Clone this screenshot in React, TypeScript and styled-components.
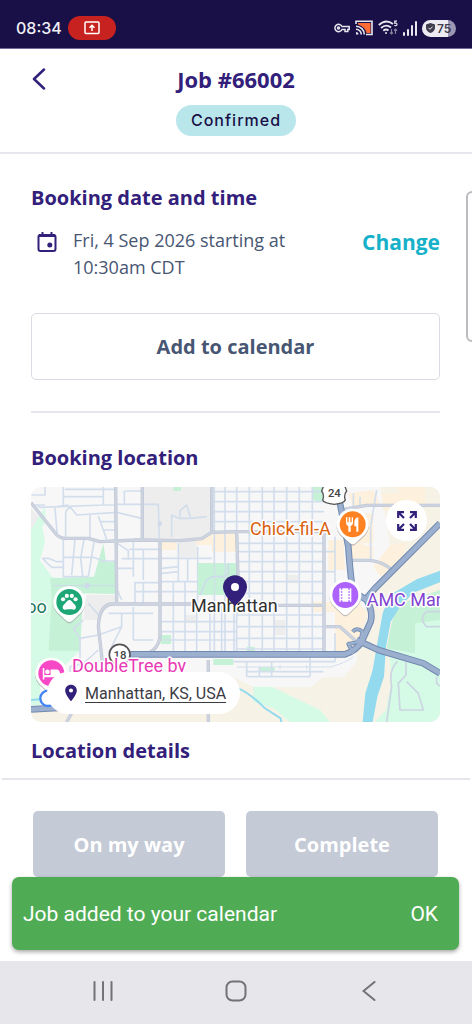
import React from 'react';
import styled, { createGlobalStyle } from 'styled-components';
import { MdHotel, MdPets, MdTheaters, MdLocationOn } from 'react-icons/md';

const color = {
  night: '#191047',
  indigo: '#32207a',
  slate: '#475672',
  teal: '#16b1c9',
  line: '#e6e6ec',
  outline: '#dadbe3',
  green: '#4fac54',
};

const GlobalStyle = createGlobalStyle`
  *, *::before, *::after { box-sizing: border-box; }
  body { margin: 0; background: #fff; font-family: 'Open Sans', 'Noto Sans', sans-serif; }
  h1, h2, p { margin: 0; }
  button { font: inherit; border: 0; padding: 0; background: none; cursor: pointer; }
  svg { display: block; }
`;

const Screen = styled.div`
  position: relative;
  display: flex;
  flex-direction: column;
  min-height: 100vh;
  overflow: hidden;
`;

const StatusBar = styled.div`
  display: flex;
  align-items: center;
  justify-content: space-between;
  height: 49px;
  padding: 8px 16px 0 16px;
  background: ${color.night};
  border-bottom: 1px solid #73699a;
  color: #f1f0f6;
  font-family: Inter, sans-serif;
`;

const StatusGroup = styled.div<{ $gap: number }>`
  display: flex;
  align-items: center;
  gap: ${({ $gap }) => $gap}px;
`;

const Clock = styled.span`
  font-size: 16px;
  font-weight: 500;
`;

const RecordingPill = styled.span`
  display: flex;
  align-items: center;
  justify-content: center;
  width: 48px;
  height: 24px;
  border-radius: 12px;
  background: #c7221f;
`;

const Battery = styled.span`
  display: flex;
  align-items: center;
  gap: 2px;
  width: 34px;
  height: 17px;
  padding-left: 4px;
  border-radius: 9px;
  background: linear-gradient(90deg, #ececf2 76%, #9c97b3 76%);
  color: #403d4c;
  font-size: 12px;
  font-weight: 600;
`;

const Header = styled.header`
  display: grid;
  grid-template-columns: 40px 1fr 40px;
  justify-items: center;
  row-gap: 11px;
  padding: 15px 19px 16px;
  border-bottom: 2px solid ${color.line};
`;

const BackButton = styled.button`
  display: flex;
  align-items: center;
  justify-content: center;
  width: 40px;
  height: 30px;
`;

const Title = styled.h1`
  color: ${color.indigo};
  font-size: 22px;
  line-height: 30px;
  font-weight: 700;
`;

const StatusBadge = styled.span`
  grid-column: 2;
  padding: 0 15px;
  border-radius: 16px;
  background: #b9e6eb;
  color: ${color.night};
  font-family: Inter, sans-serif;
  font-size: 16px;
  line-height: 31px;
  font-weight: 500;
  letter-spacing: 1px;
`;

const Content = styled.main`
  flex: 1;
  padding: 29px 32px 12px 31px;
`;

const SectionTitle = styled.h2`
  color: ${color.indigo};
  font-size: 20px;
  line-height: 30px;
  font-weight: 700;
`;

const DateRow = styled.div`
  display: flex;
  align-items: flex-start;
  gap: 16px;
  margin: 14px 0 32px;
  padding-left: 6px;
`;

const CalendarIcon = styled.svg`
  width: 20px;
  height: 27px;
`;

const DateText = styled.p`
  flex: 1;
  max-width: 240px;
  color: ${color.slate};
  font-size: 18px;
  line-height: 27px;
`;

const ChangeLink = styled.a`
  margin-left: auto;
  color: ${color.teal};
  font-size: 21px;
  line-height: 30px;
  font-weight: 700;
  text-decoration: none;
`;

const OutlineButton = styled.button`
  width: 100%;
  height: 67px;
  border: 1px solid ${color.outline};
  border-radius: 5px;
  color: ${color.slate};
  font-size: 20px;
  font-weight: 700;
`;

const Divider = styled.hr`
  height: 2px;
  margin: 31px 0 30px;
  border: 0;
  background: ${color.line};
`;

const MapCard = styled.div`
  position: relative;
  margin: 14px 0;
  border-radius: 10px;
  overflow: hidden;
`;

const MapDrawing = styled.svg`
  width: 100%;
  aspect-ratio: 409 / 235;
`;

const ExpandButton = styled.button`
  position: absolute;
  top: 13px;
  right: 13px;
  display: flex;
  align-items: center;
  justify-content: center;
  width: 41px;
  height: 41px;
  border-radius: 50%;
  background: #fff;
`;

const AddressChip = styled.a`
  position: absolute;
  left: 16px;
  bottom: 8px;
  display: flex;
  align-items: center;
  gap: 4px;
  height: 42px;
  padding: 0 14px 0 14px;
  border-radius: 21px;
  background: #fff;
  color: #3c3b44;
  font-family: Roboto, sans-serif;
  font-size: 16px;
  text-decoration: underline;
  text-underline-offset: 3px;
`;

const Footer = styled.footer`
  position: relative;
  display: grid;
  grid-template-columns: 1fr 1fr;
  gap: 21px;
  margin: 0 2px;
  padding: 31px 32px 84px 31px;
  border-top: 2px solid ${color.line};
`;

const ActionButton = styled.button`
  height: 66px;
  border-radius: 5px;
  background: #c4cad6;
  color: #fff;
  font-size: 20px;
  font-weight: 700;
`;

const Toast = styled.div`
  position: absolute;
  left: 10px;
  right: 11px;
  bottom: 11px;
  display: flex;
  align-items: center;
  justify-content: space-between;
  height: 73px;
  padding: 0 21px 0 11px;
  border-radius: 7px;
  background: ${color.green};
  box-shadow: 0 2px 4px rgba(0, 0, 0, 0.35);
  color: #fff;
  font-family: Roboto, sans-serif;
  font-size: 21px;
`;

const ToastAction = styled.button`
  color: #fff;
`;

const NavBar = styled.nav`
  display: flex;
  align-items: center;
  justify-content: space-around;
  height: 63px;
  padding: 0 37px 4px;
  background: #e7e6eb;
`;

const NavButton = styled.button`
  display: flex;
  align-items: center;
  justify-content: center;
  width: 40px;
  height: 40px;
`;

const EdgePanel = styled.span`
  position: absolute;
  top: 191px;
  right: -8px;
  width: 14px;
  height: 151px;
  border: 2px solid #bcbcc0;
  border-radius: 6px;
  background: #fff;
`;

const minorRoads = [
  // north-west streets
  'M33 45H75V21M75 75H33M50 75L60 82L250 75H290M130 21V75M130 50H250M135 28H285M250 21V75',
  'M105 83L112 170M112 80L145 75M137 95L150 80L170 105L290 97L365 115M137 95V170M210 105V175M235 108L260 178M240 125H290M250 150H290M313 33V73M292 73H365M315 33H365',
  // streets below the main road
  'M130 178V290H205M130 232H220L250 243H288M165 178L155 285M192 178L182 235L188 288M222 185L205 290M67 235L95 262L130 262M67 235H85L110 245H130',
  'M292 190L325 212V240M305 236H420M328 208H420M340 180V290M292 265H340V285M370 208V300M475 190V305M503 235V305M533 200V370M420 235H575M425 265L475 260M425 280L475 275M420 305H533',
  // campus
  'M365 73H415L418 175M455 170V105L475 115H512L500 75L480 92V112M512 115L560 110',
  'M345 305V370M345 308H420M345 335H420M370 305V370M292 330L305 360M460 305V515M495 305V515M530 370V515M570 370V515M605 370V515M642 370V515M425 335H533M425 425H650M425 455H650M425 480H650',
  // park loop
  'M540 345L560 300L575 290L570 250M625 250V280L612 293H575',
  // south-west
  'M240 410L205 370M160 445L180 475V560M160 445L190 420M180 475L235 465L305 440V400M305 440L265 520M150 560L190 550L235 510M150 560V590M340 380V480M340 480H400M265 400H400',
  // rail-side streets south of the highway
  'M680 545V590M718 560V590M755 545V590M870 520V590M680 590H870M680 575H910M640 545H945M945 460V545',
  // east side
  'M945 170V320M913 215H945M913 275H945M1000 40V90M1020 50V85M1052 140V240M1070 30L1060 90L1052 140',
];

const parkPaths = [
  'M1260 395H1220Q1195 415 1220 440H1260',
  'M1132 545Q1105 570 1115 620L1100 726M1158 545V585L1135 610L1140 690H1210L1195 640L1160 605M1250 590V610L1260 618',
];

const majorRoads = [
  'M33 68L108 162Q120 176 140 175H205L240 185L350 180L480 182L545 176L575 157L650 155L655 330',
  'M287 21L290 365',
  'M367 21V180',
  'M575 21V155',
  'M420 182V470Q415 505 385 520',
  'M247 545L235 440Q238 375 275 372H520',
  'M655 155H910M912 155V525M775 376H912',
  'M912 440H960L1010 485',
  'M970 88L1040 76H1260',
  'M985 241H1050Q1090 245 1115 270',
  'M565 540V726M160 690L140 726',
];

const highways = [
  'M330 523H975Q1010 510 1025 485L1052 425Q1060 395 1040 360L1000 335Q993 310 985 200L960 70',
  'M1260 130L1065 325L1035 360',
  'M1010 480L1075 510L1210 550L1260 580',
  'M33 688L180 680',
  'M1000 520L985 492L1022 485M998 455Q1010 440 1028 455L1020 485',
];

const gridX = [583, 615, 650, 688, 727, 762, 800, 838, 877];
const gridY = [35, 65, 95, 125, 190, 215, 245, 275, 305, 340, 376, 405, 440, 475, 507];

type MarkerProps = { x: number; y: number; fill: string; children: React.ReactNode };

const markerShape = 'M0 -47A47 47 0 0 1 37 30L9 56Q0 64 -9 56L-37 30A47 47 0 0 1 0 -47Z';

// A teardrop place marker with a white rim and a glyph in its disc.
const Marker = ({ x, y, fill, children }: MarkerProps) => (
  <g transform={`translate(${x} ${y})`}>
    <path d={markerShape} fill="#8a8a94" opacity=".5" transform="translate(0 4)" />
    <path d={markerShape} fill="#fff" />
    <circle r="39" fill={fill} />
    {children}
  </g>
);

const CityMap = () => (
  <MapDrawing viewBox="33 21 1227 705" preserveAspectRatio="xMidYMid slice" role="img" aria-label="Map of Manhattan, Kansas">
    <rect x="33" y="21" width="1227" height="705" fill="#f7f7f8" />
    {/* open country */}
    <path d="M1080 21H1260V726H33V690L200 680L240 575L640 590L700 622H870L910 592H970L1010 545V440L1060 330L1120 250Z" fill="#f6f2e6" />
    {/* built-up blocks */}
    <path d="M370 21H575V160L540 178H370ZM33 85L75 130L33 150ZM477 180H530V230H477ZM200 345H285V372L240 400V420H190ZM800 285H835V310H800ZM760 420H795V465H760ZM495 405H527V430H495Z" fill="#ededed" />
    <g fill="#fdf0dc">
      <path d="M425 183H470V210H425ZM530 182L575 160H655V215H575V195H530ZM985 40L1060 30L1080 75L1000 85ZM925 180H970L975 270H925ZM1000 100H1060V190H1010ZM1060 260L1110 195L1160 190L1150 230L1090 300ZM880 365H945V395H880ZM945 325L1000 340L1040 400L1010 490L980 520H945ZM1085 40H1160V90H1090ZM1130 21H1215V75H1160ZM970 180L1060 200V235H985Z" />
    </g>
    {/* parks */}
    <g fill="#d5fae6">
      <path d="M33 150L75 80L77 125L67 140L75 185L60 240L97 292L180 300V512L130 560L60 600V676H33Z" />
      <path d="M1105 495L1170 470V430L1260 400V726H1065L1098 690L1115 600ZM700 620H755L900 690L930 726H810L760 685L700 665Z" />
    </g>
    <g fill="#c5f1d6">
      <path d="M90 295L222 290L250 190L258 245H288V342L190 340L180 512H86L95 350ZM533 250H653V345H533ZM460 21H483V33H460ZM422 465H453V492H422ZM580 537H640V555H580ZM877 21H910V65L877 60ZM680 500H704V520H680ZM718 562H764V574H718Z" />
      <path d="M1130 375L1260 330V420L1185 430V520L1100 505L1115 430Z" />
    </g>
    {/* river and creek */}
    <path d="M1260 272L1190 298L1110 345L1088 400L1070 500L1058 570L1036 640L1028 726H1058L1072 650L1092 590L1098 500L1112 425L1140 380L1180 338L1260 307Z" fill="#93daee" />
    <path d="M655 625Q690 640 735 685L782 715L784 726M33 660L60 658" fill="none" stroke="#93daee" strokeWidth="6" />
    <g fill="none" stroke="#d3deec" strokeWidth="5" strokeLinejoin="round">
      {gridX.map((x) => <path key={x} d={`M${x} 21V515`} />)}
      {gridY.map((y) => <path key={y} d={`M${y < 180 ? 580 : 650} ${y}H912`} />)}
      {minorRoads.map((d) => <path key={d} d={d} />)}
      <path d="M650 561H930Q975 550 1000 530M860 555V568M780 555V568" strokeWidth="3" />
    </g>
    <path d="M533 250H582V345H533ZM586 250H613V345H586ZM618 250H648V345H618Z" fill="#c5f1d6" />
    <path d="M540 345L560 300L575 290H612L625 280V250" fill="none" stroke="#cfdaea" strokeWidth="5" />
    <g fill="#cfdaea"><circle cx="201" cy="317" r="8" /><circle cx="419" cy="131" r="7" /></g>
    <path d="M100 317H285" stroke="#cfdaea" strokeWidth="3" />
    <g fill="none" stroke="#ccd5e2" strokeWidth="5">{parkPaths.map((d) => <path key={d} d={d} />)}</g>
    <g fill="none" stroke="#bcc4d3" strokeWidth="10" strokeLinejoin="round">{majorRoads.map((d) => <path key={d} d={d} />)}</g>
    <g fill="none" stroke="#cdd3df" strokeWidth="7" strokeLinejoin="round">{majorRoads.map((d) => <path key={d} d={d} />)}</g>
    <g fill="none" stroke="#7189b0" strokeWidth="20" strokeLinejoin="round">
      {highways.map((d, i) => <path key={d} d={d} strokeWidth={i === 4 ? 12 : 20} />)}
    </g>
    <g fill="none" stroke="#9bafce" strokeWidth="14" strokeLinejoin="round">
      {highways.map((d, i) => <path key={d} d={d} strokeWidth={i === 4 ? 7 : 14} />)}
    </g>

    {/* route shields */}
    <path d="M912 15Q925 22 942 14Q960 22 973 15L980 33Q970 45 976 60Q972 70 943 73Q912 70 908 60Q914 45 905 33Z" fill="#fff" stroke="#565656" strokeWidth="4" />
    <circle cx="299" cy="524" r="31" fill="#fff" stroke="#565656" strokeWidth="5" />
    <g fontFamily="Roboto, sans-serif" fontWeight="500" fontSize="34" fill="#444" textAnchor="middle">
      <text x="943" y="50">24</text>
      <text x="300" y="536">18</text>
    </g>

    {/* place names */}
    <g fontFamily="Roboto, sans-serif" fontSize="54" stroke="#fff" strokeWidth="9" strokeLinejoin="round" paintOrder="stroke">
      <text x="80" y="399" textAnchor="end" fill="#1e7b5d">Zoo</text>
      <text x="932" y="164" textAnchor="end" fill="#d9620f">Chick-fil-A</text>
      <text x="1040" y="378" fill="#8143d0">AMC Manhattan</text>
      <text x="156" y="577" fill="#e83ab4">DoubleTree by</text>
      <text x="643" y="395" textAnchor="middle" fill="#303030">Manhattan</text>
    </g>

    <Marker x={148} y={366} fill="#1da676"><MdPets x={-30} y={-32} size={60} color="#fff" /></Marker>
    <Marker x={998} y={133} fill="#ff8222">
      <path d="M-20 -21H-16V-6H-12V-21H-7V-6H-3V-21H1V-5Q1 3 -6 5V22H-13V5Q-20 3 -20 -5ZM17 -21V22H11V6H5V-8Q6 -19 17 -21Z" fill="#fff" />
    </Marker>
    <Marker x={976} y={345} fill="#ad62fb"><MdTheaters x={-27} y={-27} size={54} color="#fff" /></Marker>
    <Marker x={94} y={580} fill="#f748c6"><MdHotel x={-28} y={-28} size={56} color="#fff" /></Marker>
    <circle cx="84" cy="655" r="23" fill="#fff" stroke="#4285f4" strokeWidth="7" />

    <path d="M645 286A36 36 0 0 1 681 322Q681 345 645 378Q609 345 609 322A36 36 0 0 1 645 286Z" fill={color.indigo} />
    <circle cx="645" cy="321" r="12" fill="#fff" />
  </MapDrawing>
);

const App = () => (
  <>
    <GlobalStyle />
    <Screen>
      <StatusBar>
        <StatusGroup $gap={6}>
          <Clock>08:34</Clock>
          <RecordingPill>
            <svg width="16" height="14" viewBox="0 0 16 14" fill="none" stroke="#fff" strokeWidth="1.5">
              <rect x="1" y="1" width="14" height="11.5" rx="1" />
              <path d="M8 10V5M5.5 6.8L8 4.3L10.500 6.800" />
            </svg>
          </RecordingPill>
        </StatusGroup>
        <StatusGroup $gap={5}>
          <svg width="16" height="10" viewBox="0 0 16 10" fill="none" stroke="#e8e7ee" strokeWidth="1.5">
            <path d="M8 3.500H15.200V6.500H13.800V8.500H11V6.500H8A3.700 3.700 0 1 1 8 3.500Z" />
            <circle cx="4.500" cy="5" r="1" />
          </svg>
          <svg width="18" height="16" viewBox="0 0 18 16" fill="none" stroke="#e8e7ee" strokeWidth="1.600">
            <path d="M3 3H15.500V13H11.500Q10.500 7 3 4.500Z" fill="#ff6b36" stroke="none" />
            <path d="M1 4V1.200H17V14.500H11M1 6.200A8.300 8.300 0 0 1 9.300 14.500M1 9.200A5.300 5.300 0 0 1 6.300 14.500" />
            <path d="M1 12A2.500 2.500 0 0 1 3.500 14.500H1Z" fill="#e8e7ee" stroke="none" />
          </svg>
          <svg width="20" height="16" viewBox="0 0 20 16" fill="none" stroke="#e8e7ee" strokeWidth="1.800">
            <path d="M0.800 5Q8 -1.500 15 4M3 8Q8 3.500 13 7.500M5.300 10.700Q8 8.500 10.500 10.500" />
            <circle cx="8" cy="13" r="1" fill="#e8e7ee" stroke="none" />
            <path d="M13.500 9V14M12 12.500L13.500 14L15 12.500M17.500 14V9M16 10.500L17.500 9L19 10.500" stroke="#85809c" strokeWidth="1.200" />
            <path d="M19 1.200H16.700V3.200Q19 2.800 19 4.500Q18.800 6 16.300 5.500" strokeWidth="1.200" />
          </svg>
          <svg width="14" height="15" viewBox="0 0 14 15" fill="#e8e7ee">
            <rect x="0" y="11" width="2" height="4" rx="1" />
            <rect x="4" y="8" width="2" height="7" rx="1" />
            <rect x="8" y="4" width="2" height="11" rx="1" />
            <rect x="12" y="0" width="2" height="15" rx="1" />
          </svg>
          <Battery>
            <svg width="9" height="10" viewBox="0 0 9 10">
              <path d="M4.500 0L9 1.500V5Q8.500 8.500 4.500 10Q0.500 8.500 0 5V1.500Z" fill="#403d4c" />
              <path d="M2.500 4.800L4 6.300L6.600 3.600" fill="none" stroke="#ececf2" />
            </svg>
            75
          </Battery>
        </StatusGroup>
      </StatusBar>

      <Header>
        <BackButton aria-label="Back">
          <svg width="14" height="22" viewBox="0 0 14 22" fill="none" stroke={color.indigo} strokeWidth="2.500" strokeLinecap="round" strokeLinejoin="round">
            <path d="M12 1.500L2 11L12 20.500" />
          </svg>
        </BackButton>
        <Title>Job #66002</Title>
        <StatusBadge>Confirmed</StatusBadge>
      </Header>

      <Content>
        <SectionTitle>Booking date and time</SectionTitle>
        <DateRow>
          <CalendarIcon viewBox="0 0 20 27" fill="none" stroke={color.indigo} strokeWidth="2">
            <rect x="1.500" y="8" width="17" height="16" rx="2" />
            <path d="M2 8.500H18" strokeWidth="3" />
            <path d="M5.500 5V9M14.500 5V9" />
            <circle cx="12.800" cy="18" r="2.500" fill={color.indigo} stroke="none" />
          </CalendarIcon>
          <DateText>Fri, 4 Sep 2026 starting at 10:30am CDT</DateText>
          <ChangeLink href="#change">Change</ChangeLink>
        </DateRow>
        <OutlineButton>Add to calendar</OutlineButton>
        <Divider />
        <SectionTitle>Booking location</SectionTitle>
        <MapCard>
          <CityMap />
          <ExpandButton aria-label="Expand map">
            <svg width="20" height="20" viewBox="0 0 20 20" fill="none" stroke={color.indigo} strokeWidth="2.200">
              <path d="M1.200 7V1.200H7M1.500 1.500L7 7M13 1.200H18.800V7M18.500 1.500L13 7M1.200 13V18.800H7M1.500 18.500L7 13M13 18.800H18.800V13M18.500 18.500L13 13" />
            </svg>
          </ExpandButton>
          <AddressChip href="#map">
            <MdLocationOn size={20} color={color.indigo} />
            Manhattan, KS, USA
          </AddressChip>
        </MapCard>
        <SectionTitle>Location details</SectionTitle>
      </Content>

      <Footer>
        <ActionButton>On my way</ActionButton>
        <ActionButton>Complete</ActionButton>
        <Toast role="status">
          Job added to your calendar
          <ToastAction>OK</ToastAction>
        </Toast>
      </Footer>

      <NavBar aria-label="System navigation">
        <NavButton aria-label="Recent apps">
          <svg width="20" height="20" viewBox="0 0 20 20" stroke="#737277" strokeWidth="2" strokeLinecap="round">
            <path d="M1.500 1V19M10 1V19M18.500 1V19" />
          </svg>
        </NavButton>
        <NavButton aria-label="Home">
          <svg width="22" height="22" viewBox="0 0 22 22" fill="none" stroke="#737277" strokeWidth="2">
            <rect x="1.500" y="1.500" width="19" height="19" rx="6" />
          </svg>
        </NavButton>
        <NavButton aria-label="Go back">
          <svg width="14" height="20" viewBox="0 0 14 20" fill="none" stroke="#737277" strokeWidth="2" strokeLinecap="round">
            <path d="M12.500 1L1.500 10L12.500 19" />
          </svg>
        </NavButton>
      </NavBar>
      <EdgePanel />
    </Screen>
  </>
);

export default App;
